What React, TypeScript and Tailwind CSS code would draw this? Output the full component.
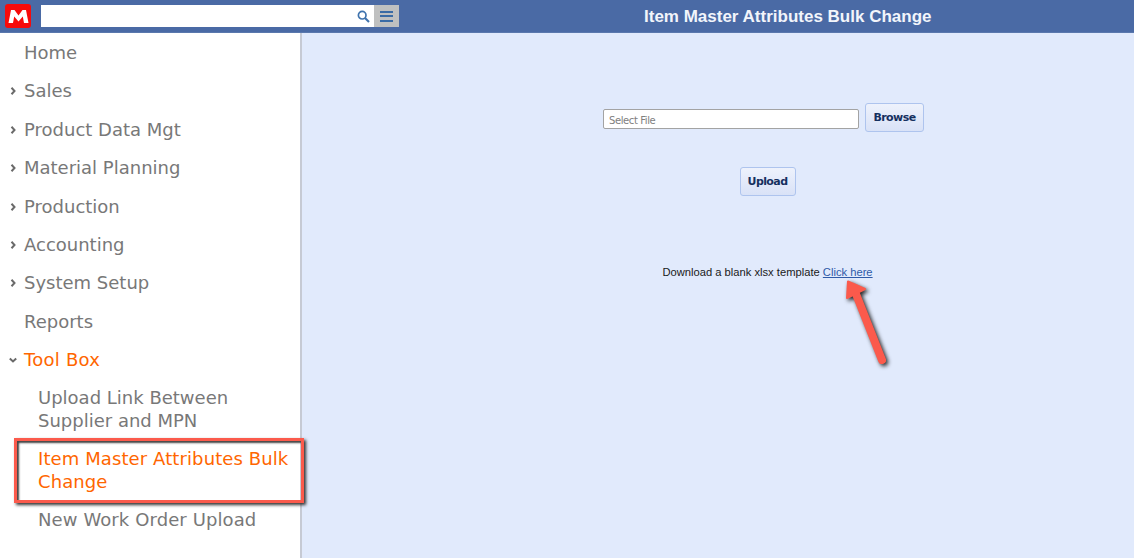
import React from "react";

const items: { label: string; arrow?: boolean }[] = [
  { label: "Home" },
  { label: "Sales", arrow: true },
  { label: "Product Data Mgt", arrow: true },
  { label: "Material Planning", arrow: true },
  { label: "Production", arrow: true },
  { label: "Accounting", arrow: true },
  { label: "System Setup", arrow: true },
  { label: "Reports" },
];

function Chevron({ down }: { down?: boolean }) {
  return (
    <svg width="8" height="8" viewBox="0 0 8 8" className="absolute left-[9px] top-[14px]" fill="none" stroke="#6a6a6a" strokeWidth="2">
      {down ? <path d="M0.8 2.5 L4 5.5 L7.2 2.5" /> : <path d="M2.5 0.8 L5.5 4 L2.5 7.2" />}
    </svg>
  );
}

export default function App() {
  return (
    <div className="w-[1134px] h-[558px] overflow-hidden flex flex-col bg-[#e1eafc] font-['Liberation_Sans',sans-serif]">
      <header className="h-[33px] shrink-0 bg-[#4a6aa5] flex items-center border-b border-[#5a78ad]">
        <div className="w-[26px] h-[24px] ml-[5px] rounded-[3px] bg-[#f70a0a] flex items-center justify-center">
          <svg width="21" height="13" viewBox="0 0 21 13">
            <path d="M0.5 13 L3 0 L6.5 0 L10.5 5.5 L14.5 0 L18 0 L20.5 13 L16 13 L14.8 6.5 L10.5 11.5 L6.2 6.5 L5 13 Z" fill="#fff" />
          </svg>
        </div>
        <div className="ml-[10px] w-[333px] h-[22px] bg-white flex items-center justify-end pr-[4px]">
          <svg width="13" height="13" viewBox="0 0 13 13" fill="none" stroke="#3f73ad" strokeWidth="1.7">
            <circle cx="5.2" cy="5.2" r="3.8" />
            <path d="M8 8 L12 12" strokeWidth="2.2" />
          </svg>
        </div>
        <div className="w-[25px] h-[22px] bg-[#bfc0c0] flex flex-col items-center justify-center gap-[2.5px]">
          <span className="w-[13px] h-[2px] bg-[#3a6ba5]" />
          <span className="w-[13px] h-[2px] bg-[#3a6ba5]" />
          <span className="w-[13px] h-[2px] bg-[#3a6ba5]" />
        </div>
        <h1 className="ml-[245px] text-[17px] font-bold text-[#f2f5fb] leading-none whitespace-nowrap">Item Master Attributes Bulk Change</h1>
      </header>
      <div className="flex-1 flex min-h-0 relative">
        <nav className="w-[302px] shrink-0 bg-white border-r-2 border-[#c6cad4] font-['DejaVu_Sans',sans-serif] text-[18px] text-[#787878] pt-[2px]">
          {items.map((it) => (
            <div key={it.label} className="relative h-[38.4px] pl-[24px] leading-[36px] whitespace-nowrap">
              {it.arrow && <Chevron />}
              {it.label}
            </div>
          ))}
          <div className="relative h-[38.4px] pl-[24px] leading-[36px] text-[#ff6600] tracking-[0.25px]">
            <Chevron down />
            Tool Box
          </div>
          <div className="pl-[38px] leading-[23px] pt-[5px]">Upload Link Between<br />Supplier and MPN</div>
          <div className="pl-[38px] leading-[23px] pt-[15px] text-[#ff6600] whitespace-nowrap tracking-[0.1px]">Item Master Attributes Bulk<br />Change</div>
          <div className="pl-[38px] leading-[23px] pt-[15px] whitespace-nowrap tracking-[0.1px]">New Work Order Upload</div>
        </nav>
        <main className="flex-1 flex flex-col items-center pl-[99px] text-[11px]">
          <div className="mt-[70px] ml-[-8px] flex items-start gap-[6px]">
            <div className="mt-[6px] w-[256px] h-[20px] bg-white border border-[#a3a3a3] rounded-[2px] pl-[5px] pt-[1px] text-[10px] leading-[20px] text-[#808080] font-['DejaVu_Sans',sans-serif] tracking-[-0.4px]">Select File</div>
            <button className="w-[59px] h-[29px] pt-[1px] rounded-[3px] border border-[#aec4ee] bg-gradient-to-b from-[#eef2fc] to-[#d9e2f7] text-[11px] font-bold text-[#16305f] font-['DejaVu_Sans',sans-serif] tracking-[-0.55px]">Browse</button>
          </div>
          <button className="mt-[35px] w-[56px] h-[29px] pt-[1px] rounded-[3px] border border-[#aec4ee] bg-gradient-to-b from-[#eef2fc] to-[#d9e2f7] text-[11px] font-bold text-[#16305f] font-['DejaVu_Sans',sans-serif] tracking-[-0.6px]">Upload</button>
          <p className="mt-[70px] text-[11.2px] leading-[13px] text-[#1a1a1a] whitespace-nowrap">
            Download a blank xlsx template <span className="text-[#2f5aa8] underline">Click here</span>
          </p>
        </main>
        <div className="absolute left-[14px] top-[405px] w-[290px] h-[65px] border-[3px] border-[#fb5a4c] shadow-[2px_2px_3px_#333,inset_2px_2px_2px_#444]" />
        <svg className="absolute left-[842px] top-[245px] drop-shadow-[2px_2px_2px_#222]" width="56" height="92" viewBox="0 0 56 92" fill="none">
          <path d="M40 82 L14 16" stroke="#fb5a4c" strokeWidth="8" strokeLinecap="round" />
          <path d="M6 3.5 L5 20 L23 11 Z" fill="#fb5a4c" stroke="#fb5a4c" strokeWidth="2" strokeLinejoin="round" />
        </svg>
      </div>
    </div>
  );
}
